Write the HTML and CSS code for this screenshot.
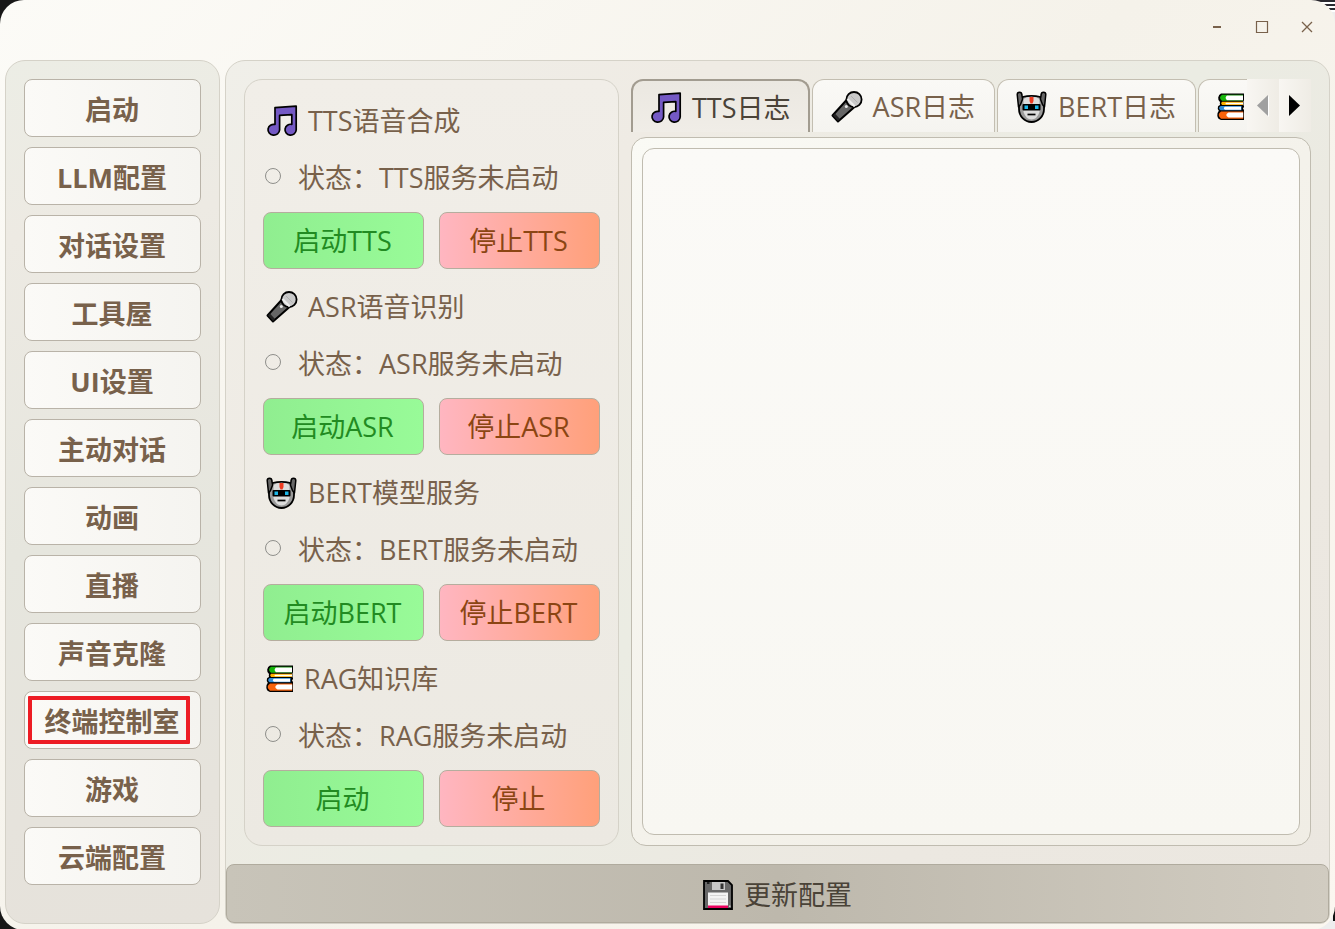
FILE: index.html
```html
<!DOCTYPE html>
<html lang="zh-CN">
<head>
<meta charset="utf-8">
<title>终端控制室</title>
<link rel="stylesheet" href="styles.css">
</head>
<body>
<svg class="sprite" aria-hidden="true">
  <symbol id="i-music" viewBox="0 0 32 32">
    <path d="M9 2.6 30.2 1.2V25a5.6 5.4 0 1 1-4.4-5.6V9.6L13.6 10.4V25A5.8 5.4 0 1 1 9 19.4Z" fill="#7459c4" stroke="#000" stroke-width="1.7" stroke-linejoin="round"/>
  </symbol>
  <symbol id="i-mic" viewBox="0 0 32 32">
    <path d="M16 8.5 1.5 24.5 7 30.500 23.500 16Z" fill="#666" stroke="#000" stroke-width="2" stroke-linejoin="round"/>
    <path d="M2 24.6 7 30 9 28 3.900 22.500Z" fill="#222"/>
    <circle cx="23" cy="8.6" r="7.6" fill="#c9c9c9" stroke="#000" stroke-width="1.8"/>
    <path d="M16.400 8 23.800 15.600" stroke="#ededed" stroke-width="2.2"/>
    <path d="M20 5 26.500 11.500" stroke="#b0b0b0" stroke-width="1"/>
    <circle cx="15.3" cy="15.6" r="1.5" fill="#e8e8e8"/>
  </symbol>
  <symbol id="i-robot" viewBox="0 0 32 32">
    <path d="M3 8.500Q6 4.800 15.500 4.800T28 8.500V18C28 25 22.500 31 15.500 31S3 25 3 18Z" fill="#9a9a9a" stroke="#000" stroke-width="1.8"/>
    <path d="M7.500 8q3-2.200 8-2.200t8 2.200v13q-2.500 7.500-8 7.500t-8-7.500Z" fill="#dcdcdc"/>
    <path d="M1.200 3.500c0-3 4.600-3 4.600 0L6.600 8 4.500 13.500 2.500 16ZM29.800 3.500c0-3-4.600-3-4.600 0L24.400 8l2.100 5.500 2 2.500Z" fill="#666" stroke="#000" stroke-width="1.500" stroke-linejoin="round"/>
    <path d="M13.500 6h4v4l-1 2.500h-2l-1-2.500z" fill="#ee3b20"/>
    <rect x="6.500" y="13" width="18" height="6.500" rx="1" fill="#000"/>
    <path d="M8.500 14.500h3.500v3.500h-3.500zM19 14.500h3.500v3.500h-3.500z" fill="#1bb6e8"/>
    <path d="M11.500 23.500h8" stroke="#000" stroke-width="1.700"/>
  </symbol>
  <symbol id="i-books" viewBox="0 0 28 32">
    <path d="M4 2.500H27V9.800H26.500V14.500H27V16L26 17.500 27 19V29H4Q.5 28 .3 24.500 .3 21.500 1.800 19.800 .2 17.500 1 15.500 1.400 14.500 3 14 2.600 12.500 3 11 .8 9 1.200 6.500 1.700 3.500 4 2.500Z" fill="#000"/>
    <path d="M5 3.800H26V4.800H10V9.200H26V9.800H5Q1 6.800 5 3.800Z" fill="#16b50b"/>
    <path d="M10 4.600H26V9.200H10Q7.200 7 10 4.600Z" fill="#fff"/>
    <path d="M5 10.800H26V14H5Q3.200 12.400 5 10.800Z" fill="#ffb200"/>
    <path d="M9 11.700H26V13.200H9Q7.800 12.500 9 11.700Z" fill="#fff"/>
    <path d="M3.600 15H24.500V19.300H3.600Q.6 17 3.600 15Z" fill="#318fdb"/>
    <path d="M8 15.700H24V18.700H8Q5.600 17.200 8 15.700Z" fill="#fff"/>
    <path d="M4 20.400H26.200V27.700H4Q-.6 24 4 20.400Z" fill="#f7630c"/>
    <path d="M11.500 21.500H26.200V26.600H11.500Q7 24 11.500 21.500Z" fill="#fff"/>
  </symbol>
  <symbol id="i-disk" viewBox="0 0 30 30">
    <path d="M1 1H25L29 5V29H1Z" fill="#686868" stroke="#000" stroke-width="1.800"/>
    <path d="M9 2H22V10H9Z" fill="#c8c8c8"/><path d="M17.500 3.500H20.500V9H17.500Z" fill="#333"/>
    <path d="M4 2H6.500V4H4Z" fill="#222"/>
    <path d="M5 12.500H25V26H5Z" fill="#f3f3f3"/><path d="M7 15.500H23M7 19H23M7 22.500H23" stroke="#d5d5d5"/>
    <path d="M5 25.500H25V28H5Z" fill="#e9005e"/><path d="M26 25.500h1.500v1.500H26z" fill="#ccc"/>
  </symbol>
</svg>

<div class="window">
  <header class="titlebar">
    <button class="win-btn" type="button" aria-label="最小化"><svg width="14" height="14" viewBox="0 0 14 14"><path d="M3 7h8" stroke="currentColor" stroke-width="2"/></svg></button>
    <button class="win-btn" type="button" aria-label="最大化"><svg width="14" height="14" viewBox="0 0 14 14"><path d="M1.500 1.500h11v11h-11z" fill="none" stroke="currentColor" stroke-width="1.200"/></svg></button>
    <button class="win-btn" type="button" aria-label="关闭"><svg width="14" height="14" viewBox="0 0 14 14"><path d="M2 2l10 10M12 2 2 12" stroke="currentColor" stroke-width="1.300"/></svg></button>
  </header>

  <div class="body">
    <nav class="sidebar">
      <button class="nav-btn" type="button">启动</button>
      <button class="nav-btn" type="button">LLM配置</button>
      <button class="nav-btn" type="button">对话设置</button>
      <button class="nav-btn" type="button">工具屋</button>
      <button class="nav-btn" type="button">UI设置</button>
      <button class="nav-btn" type="button">主动对话</button>
      <button class="nav-btn" type="button">动画</button>
      <button class="nav-btn" type="button">直播</button>
      <button class="nav-btn" type="button">声音克隆</button>
      <button class="nav-btn marked" type="button">终端控制室</button>
      <button class="nav-btn" type="button">游戏</button>
      <button class="nav-btn" type="button">云端配置</button>
    </nav>

    <main class="main">
      <div class="content">
        <div class="services">
          <section class="service">
            <h2 class="service-title"><svg class="icon"><use href="#i-music"/></svg>TTS语音合成</h2>
            <p class="status"><span class="dot"></span>状态：TTS服务未启动</p>
            <div class="actions"><button class="btn start" type="button">启动TTS</button><button class="btn stop" type="button">停止TTS</button></div>
          </section>
          <section class="service">
            <h2 class="service-title"><svg class="icon"><use href="#i-mic"/></svg>ASR语音识别</h2>
            <p class="status"><span class="dot"></span>状态：ASR服务未启动</p>
            <div class="actions"><button class="btn start" type="button">启动ASR</button><button class="btn stop" type="button">停止ASR</button></div>
          </section>
          <section class="service">
            <h2 class="service-title"><svg class="icon"><use href="#i-robot"/></svg>BERT模型服务</h2>
            <p class="status"><span class="dot"></span>状态：BERT服务未启动</p>
            <div class="actions"><button class="btn start" type="button">启动BERT</button><button class="btn stop" type="button">停止BERT</button></div>
          </section>
          <section class="service">
            <h2 class="service-title"><svg class="icon books"><use href="#i-books"/></svg>RAG知识库</h2>
            <p class="status"><span class="dot"></span>状态：RAG服务未启动</p>
            <div class="actions"><button class="btn start" type="button">启动</button><button class="btn stop" type="button">停止</button></div>
          </section>
        </div>

        <div class="logs">
          <div class="tabbar">
            <div class="tabs" role="tablist">
              <button class="tab active" type="button" role="tab" aria-selected="true"><svg class="icon"><use href="#i-music"/></svg>TTS日志</button>
              <button class="tab" type="button" role="tab" aria-selected="false"><svg class="icon"><use href="#i-mic"/></svg>ASR日志</button>
              <button class="tab" type="button" role="tab" aria-selected="false"><svg class="icon"><use href="#i-robot"/></svg>BERT日志</button>
              <button class="tab" type="button" role="tab" aria-selected="false" aria-label="RAG"><svg class="icon books"><use href="#i-books"/></svg></button>
            </div>
            <button class="scroller" type="button" disabled aria-label="向左滚动"><svg width="12" height="22" viewBox="0 0 12 22"><path d="M12 1v21L1 11z" fill="#fff"/><path d="M11 0v21L0 10.500z" fill="#a0a0a0"/></svg></button>
            <button class="scroller" type="button" aria-label="向右滚动"><svg width="12" height="22" viewBox="0 0 12 22"><path d="M0 0v21l11-10.500z" fill="#000"/></svg></button>
          </div>
          <div class="pane"><textarea class="log" readonly aria-label="TTS日志"></textarea></div>
        </div>
      </div>
      <button class="save" type="button"><svg class="disk"><use href="#i-disk"/></svg>更新配置</button>
    </main>
  </div>
</div>
</body>
</html>
```
FILE: styles.css
```css
* { box-sizing: border-box; }

html { height: 100%; }

body {
  margin: 0;
  height: 100%;
  background:
    repeating-linear-gradient(#2b2930 0 2px, #fff 2px 4px) top right / 24px 12px no-repeat,
    linear-gradient(#111, #111) right 0 bottom 8px / 2px 14px no-repeat,
    linear-gradient(90deg, #171717 50%, #eeeeee 50%);
  color: #78614b;
  font: 27px/40px "Open Sans", "Noto Sans CJK SC", sans-serif;
  font-kerning: none;
}

button { font: inherit; font-kerning: inherit; color: inherit; margin: 0; padding: 0; }

.sprite { position: absolute; width: 0; height: 0; }

.window {
  display: flex;
  flex-direction: column;
  min-height: 100%;
  padding: 0 5px 6px;
  border-radius: 24px;
  background: linear-gradient(135deg, #fcfbf7 0%, #f5f2ea 50%, #fbf7f0 100%);
}

.titlebar {
  display: flex;
  justify-content: flex-end;
  height: 54px;
  margin-bottom: 6px;
  padding-right: 1px;
}

.win-btn {
  display: grid;
  place-items: center;
  width: 45px;
  border: 0;
  background: none;
}

.body {
  flex: 1;
  display: grid;
  grid-template-columns: 215px minmax(0, 1fr);
  gap: 5px;
}

.sidebar {
  display: flex;
  flex-direction: column;
  gap: 10px;
  padding: 18px;
  border: 1px solid #d5d2c8;
  border-radius: 20px;
  background: linear-gradient(170deg, #ecede5 0%, #edeae3 20%, #e6e6de 55%, #e6e3dc 85%, #e6e2db 100%);
}

.nav-btn {
  position: relative;
  height: 58px;
  padding: 3px 1px 0 0;
  border: 1px solid #b9b3a8;
  border-radius: 8px;
  background: linear-gradient(90deg, #fbfaf7, #f5f4f0);
  font-weight: 700;
}

.marked::after {
  content: "";
  position: absolute;
  inset: 4px 10px 4px 3px;
  border: 4px solid #ed1c24;
  border-radius: 1px;
}

.main {
  display: flex;
  flex-direction: column;
  gap: 18px;
  border: 1px solid #d5d2c8;
  border-radius: 20px 20px 10px 10px;
  background: linear-gradient(135deg, #f0efe9 0%, #efebe4 25%, #ebece3 50%, #ece8e1 75%, #ebe7e0 100%);
}

.content {
  flex: 1;
  display: grid;
  grid-template-columns: 375px minmax(0, 1fr);
  gap: 12px;
  padding: 18px 18px 0;
}

.services {
  display: flex;
  flex-direction: column;
  gap: 15px;
  padding: 18px;
  border: 1px solid #d5d2c8;
  border-radius: 18px;
  background: linear-gradient(#f1eee8, #ece9e2);
}

.service { display: grid; gap: 15px; }

.service-title {
  display: flex;
  align-items: center;
  gap: 10px;
  height: 45px;
  margin: 0;
  padding-left: 3px;
  font-size: 27px;
  font-weight: 400;
}

.icon { flex: none; width: 32px; height: 32px; }
.icon.books { width: 28px; }

.status {
  display: flex;
  align-items: center;
  gap: 17px;
  height: 39px;
  margin: 0;
  padding-left: 2px;
}

.dot {
  width: 16px;
  height: 16px;
  margin-bottom: 4px;
  border: 1px solid #8f8f8b;
  border-radius: 50%;
}

.actions {
  display: grid;
  grid-template-columns: 1fr 1fr;
  gap: 15px;
}

.btn {
  height: 57px;
  padding: 1px 2px 0 0;
  border: 1px solid #b5ad9e;
  border-radius: 8px;
}

.start { color: #228b22; background: linear-gradient(90deg, #90ee90, #98fb98); }
.stop { color: #8b4513; background: linear-gradient(90deg, #ffb6c1, #ffa07a); }

.logs {
  display: flex;
  flex-direction: column;
  gap: 5px;
}

.tabbar { display: flex; height: 53px; }

.tabs {
  flex: 1;
  display: flex;
  gap: 2px;
  overflow: hidden;
}

.tab {
  flex: none;
  display: flex;
  align-items: center;
  gap: 10px;
  padding: 2px 19px 0 18px;
  border: 1px solid #c3beb1;
  border-bottom: 0;
  border-radius: 12px 12px 0 0;
  background: linear-gradient(#faf9f6, #f5f4f0);
}

.tab.active {
  padding: 3px 17px 0 17px;
  border: 2px solid #a29c90;
  border-bottom: 0;
  background: linear-gradient(#ebe8e1, #f0ede7);
  color: #4a4338;
}

.scroller {
  display: grid;
  place-items: center;
  width: 32px;
  border: 0;
  background: linear-gradient(90deg, #f8f6f2, #efece5);
}

.pane {
  flex: 1;
  display: flex;
  padding: 10px;
  border: 1px solid #c0bcb0;
  border-radius: 15px;
  background: linear-gradient(135deg, #fafaf5, #f4f2eb 50%, #f0ede5);
}

.log {
  flex: 1;
  resize: none;
  border: 1px solid #c0bcb0;
  border-radius: 12px;
  background: linear-gradient(#fbfaf7, #f8f7f2);
  color: inherit;
  font: inherit;
  outline: 0;
}

.save {
  display: flex;
  align-items: center;
  justify-content: center;
  gap: 11px;
  height: 59px;
  padding-top: 3px;
  border: 1px solid #b0ab9e;
  border-radius: 8px;
  background: linear-gradient(90deg, #c8c4b9, #bdb8ac 50%, #d1ccc1);
  color: #4a4338;
}

.disk { width: 30px; height: 30px; }
```
